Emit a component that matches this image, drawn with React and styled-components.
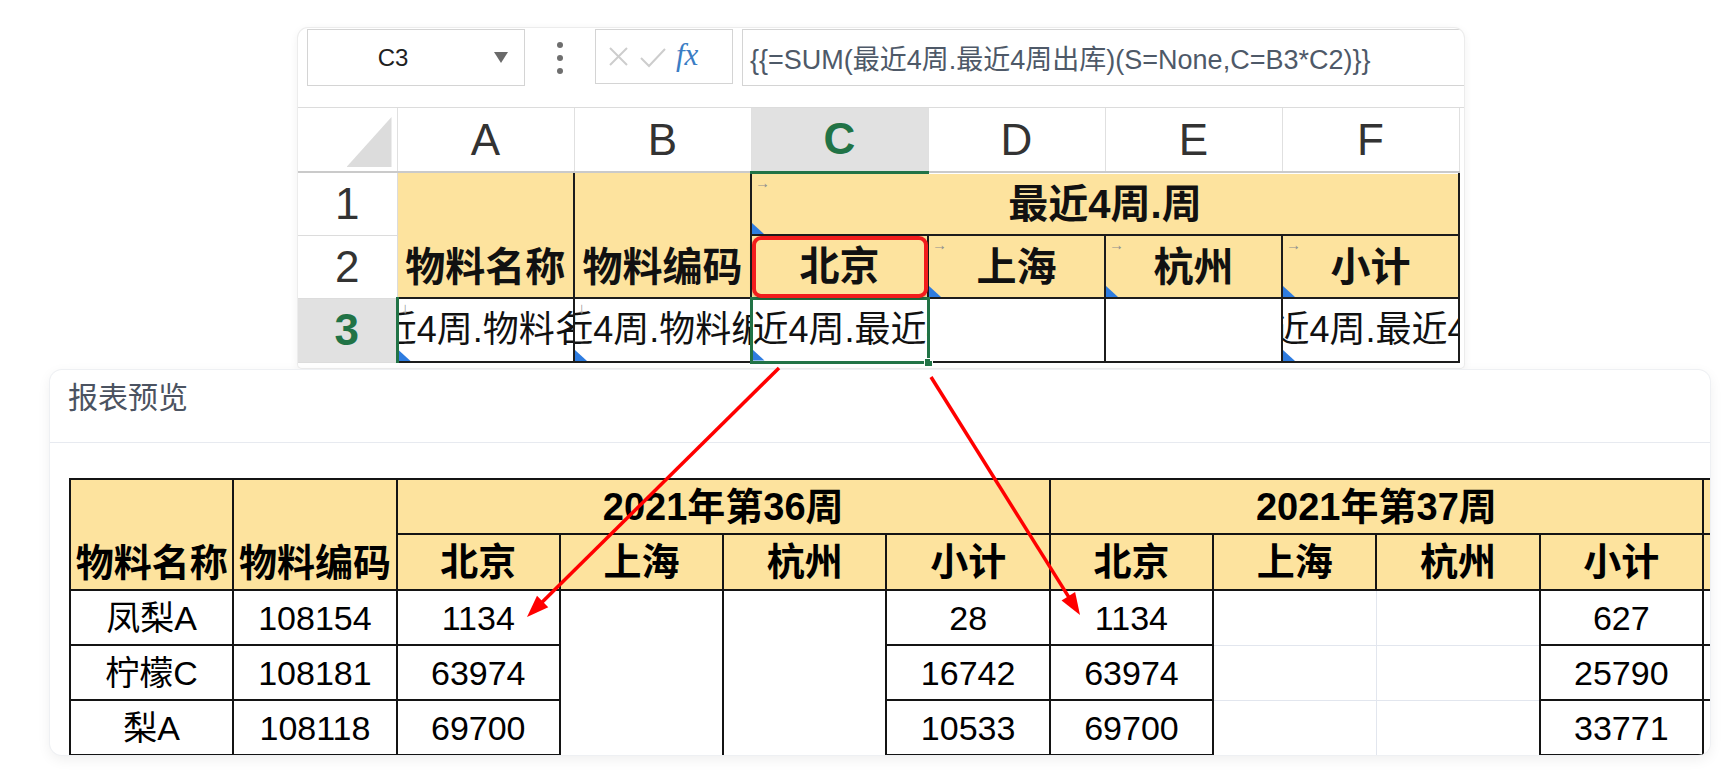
import styled, { createGlobalStyle, css } from 'styled-components'

const YELLOW = '#fde39e'
const GREEN = '#217346'

const GlobalStyle = createGlobalStyle`
  *, *::before, *::after { box-sizing:border-box; }
  html, body { margin:0; padding:0; background:#fff; }
  body { font-family:"Liberation Sans", "Noto Sans CJK SC", sans-serif; }
`

const Page = styled.div`
position:relative;
width:1732px;
height:770px;
overflow:hidden;
padding-top:28px;
background:#fff;
`

/* ---------- spreadsheet card ---------- */

const SheetCard = styled.div`
margin-left:298px;
width:1166px;
height:340px;
background:#fff;
border-radius:10px 10px 4px 4px;
box-shadow:0 0 0 1px #ececec, 0 2px 10px rgba(0,0,0,0.07);
overflow:hidden;
`

const Toolbar = styled.div`
display:flex;
align-items:flex-start;
height:80px;
padding:1px 0 0 9px;
border-bottom:1px solid #dcdcdc;
`

const NameBox = styled.div`
display:flex;
align-items:center;
width:218px;
height:57px;
border:1px solid #d4d4d4;
`

const NameText = styled.div`
flex:1;
text-align:center;
font-size:24px;
color:#1f1f1f;
`

const DropArrow = styled.span`
width:0;
height:0;
margin:0 16px;
border-left:7px solid transparent;
border-right:7px solid transparent;
border-top:11px solid #6a6a6a;
`

const MoreDots = styled.div`
display:flex;
flex-direction:column;
align-items:center;
justify-content:center;
gap:7px;
width:70px;
height:57px;
`

const Dot = styled.span`
width:6px;
height:6px;
border-radius:50%;
background:#6e6e6e;
`

const FxBox = styled.div`
display:flex;
align-items:center;
gap:9px;
width:138px;
height:55px;
padding-left:11px;
border:1px solid #d4d4d4;
`

const Fx = styled.span`
font-family:"Liberation Serif", serif;
font-style:italic;
font-size:31px;
line-height:31px;
margin-top:-4px;
color:#3b7dc4;
`

const FormulaBox = styled.div`
flex:1;
display:flex;
align-items:center;
height:57px;
margin-left:9px;
padding-left:7px;
border:1px solid #d4d4d4;
border-right:none;
font-size:27px;
color:#4e5968;
white-space:nowrap;
overflow:hidden;
`

const SheetTable = styled.table`
border-collapse:collapse;
table-layout:fixed;
width:1161px;
`

const ColHead = styled.th`
height:64px;
padding:0;
font-size:44px;
font-weight:400;
color:#333;
text-align:center;
background:#fff;
border-right:1px solid #e0e0e0;
border-bottom:2px solid #cacaca;
${(p) => p.$active && css`
  background:#e1e1e1;
  color:${GREEN};
  font-weight:700;
  border-bottom:3px solid ${GREEN};
`}
`

const CornerHead = styled(ColHead)`
vertical-align:bottom;
`

const SelectAll = styled.div`
width:45px;
height:50px;
margin:0 5px 4px auto;
background:#dcdcdc;
clip-path:polygon(100% 0, 100% 100%, 0 100%);
`

const RowNum = styled.th`
height:${(p) => p.$h}px;
padding:0;
font-size:44px;
font-weight:400;
color:#333;
text-align:center;
background:#fff;
border-right:1px solid #dcdcdc;
border-bottom:1px solid #dcdcdc;
${(p) => p.$active && css`
  background:#e1e1e1;
  color:${GREEN};
  font-weight:700;
  border-right:3px solid ${GREEN};
`}
`

const SheetCell = styled.td`
position:relative;
padding:0;
border:2px solid #1c1c1c;
${(p) => p.$noTop && 'border-top:none;'}
${(p) => p.$noLeft && 'border-left:none;'}
background:${(p) => (p.$fill ? YELLOW : '#fff')};
font-size:${(p) => (p.$bold ? 40 : 36)}px;
font-weight:${(p) => (p.$bold ? 700 : 400)};
color:#111;
vertical-align:${(p) => (p.$bottom ? 'bottom' : 'middle')};
${(p) => p.$selected && css`border:3px solid ${GREEN};`}
`

const CellText = styled.div`
display:flex;
justify-content:${(p) => (p.$left ? 'flex-start' : 'center')};
width:100%;
line-height:60px;
white-space:nowrap;
overflow:hidden;
`

const CornerMark = styled.span`
position:absolute;
left:0;
bottom:0;
width:12px;
height:11px;
background:#2e7ce0;
clip-path:polygon(0 0, 100% 100%, 0 100%);
`

const FlowMark = styled.span`
position:absolute;
left:3px;
top:1px;
font-size:15px;
line-height:15px;
font-weight:400;
color:#8e8e8e;
`

const RedFrame = styled.span`
position:absolute;
inset:0 -1px -1px 0;
border:4px solid #f21c1c;
border-radius:9px;
box-shadow:0 1px 3px rgba(0,0,0,0.25);
`

const FillHandle = styled.span`
position:absolute;
right:-6px;
bottom:-6px;
width:9px;
height:9px;
background:${GREEN};
border:1px solid #fff;
`

/* ---------- preview card ---------- */

const PreviewCard = styled.div`
display:flex;
flex-direction:column;
margin:2px 0 0 50px;
width:1660px;
height:385px;
background:#fff;
border-radius:12px;
box-shadow:0 0 0 1px #eef0f3, 0 4px 14px rgba(0,0,0,0.07);
overflow:hidden;
`

const PreviewHeader = styled.div`
height:73px;
padding:8px 0 0 18px;
border-bottom:1px solid #e7eaf0;
font-size:30px;
line-height:40px;
color:#4b5361;
`

const PreviewBody = styled.div`
flex:1;
padding:35px 0 0 19px;
overflow:hidden;
`

const ReportTable = styled.table`
border-collapse:collapse;
table-layout:fixed;
width:1797px;
`

const RCell = styled.td`
height:${(p) => p.$h || 55}px;
padding:0;
border:2px solid #141414;
background:${(p) => (p.$head ? YELLOW : '#fff')};
font-size:${(p) => (p.$head ? 38 : 34)}px;
font-weight:${(p) => (p.$head ? 700 : 400)};
line-height:52px;
color:#000;
text-align:center;
white-space:nowrap;
overflow:hidden;
vertical-align:${(p) => (p.$bottom ? 'bottom' : 'middle')};
${(p) => p.$soft && 'border:1px solid #e2e6ee;'}
`

/* ---------- arrows ---------- */

const Overlay = styled.svg`
position:absolute;
left:0;
top:0;
width:1732px;
height:770px;
pointer-events:none;
`

function Arrow({ from, to }) {
  const [x1, y1] = from
  const [x2, y2] = to
  const len = Math.hypot(x2 - x1, y2 - y1)
  const ux = (x2 - x1) / len
  const uy = (y2 - y1) / len
  const hl = 22
  const hw = 8
  const bx = x2 - ux * hl
  const by = y2 - uy * hl
  const pts = [
    [x2, y2],
    [bx - uy * hw, by + ux * hw],
    [bx + uy * hw, by - ux * hw],
  ]
  return (
    <g>
      <line x1={x1} y1={y1} x2={bx + ux * 3} y2={by + uy * 3} stroke="#ff0000" strokeWidth="3.5" />
      <polygon points={pts.map((p) => p.join(',')).join(' ')} fill="#ff0000" />
    </g>
  )
}

const cities = ['北京', '上海', '杭州', '小计']

const rows = [
  { name: '凤梨A', code: '108154', w36: ['1134', '28'], w37: ['1134', '627'] },
  { name: '柠檬C', code: '108181', w36: ['63974', '16742'], w37: ['63974', '25790'] },
  { name: '梨A', code: '108118', w36: ['69700', '10533'], w37: ['69700', '33771'] },
  { name: '苹果B', code: '108120', w36: ['5210', '412'], w37: ['5210', '388'] },
]

const rowHeights = [53, 55, 55, 55]

export default function App() {
  return (
    <Page>
      <GlobalStyle />

      <SheetCard>
        <Toolbar>
          <NameBox>
            <NameText>C3</NameText>
            <DropArrow />
          </NameBox>
          <MoreDots>
            <Dot />
            <Dot />
            <Dot />
          </MoreDots>
          <FxBox>
            <svg width="23" height="23" viewBox="0 0 23 23">
              <path d="M3 3 L20 20 M20 3 L3 20" stroke="#cdcdcd" strokeWidth="2" fill="none" />
            </svg>
            <svg width="28" height="24" viewBox="0 0 28 24">
              <path d="M2 13 L10 21 L26 4" stroke="#cdcdcd" strokeWidth="2" fill="none" />
            </svg>
            <Fx>fx</Fx>
          </FxBox>
          <FormulaBox>{'{{=SUM(最近4周.最近4周出库)(S=None,C=B3*C2)}}'}</FormulaBox>
        </Toolbar>

        <SheetTable>
          <colgroup>
            <col style={{ width: 99 }} />
            {['A', 'B', 'C', 'D', 'E', 'F'].map((c) => (
              <col key={c} style={{ width: 177 }} />
            ))}
          </colgroup>
          <tbody>
            <tr>
              <CornerHead>
                <SelectAll />
              </CornerHead>
              {['A', 'B', 'C', 'D', 'E', 'F'].map((c) => (
                <ColHead key={c} $active={c === 'C'}>{c}</ColHead>
              ))}
            </tr>
            <tr>
              <RowNum $h={63}>1</RowNum>
              <SheetCell rowSpan={2} $fill $bold $bottom $noTop $noLeft>
                <CellText>物料名称</CellText>
              </SheetCell>
              <SheetCell rowSpan={2} $fill $bold $bottom $noTop>
                <CellText>物料编码</CellText>
              </SheetCell>
              <SheetCell colSpan={4} $fill $bold $noTop>
                <FlowMark>→</FlowMark>
                <CellText>最近4周.周</CellText>
                <CornerMark />
              </SheetCell>
            </tr>
            <tr>
              <RowNum $h={63}>2</RowNum>
              <SheetCell $fill $bold>
                <CellText>北京</CellText>
                <RedFrame />
              </SheetCell>
              {['上海', '杭州', '小计'].map((c) => (
                <SheetCell key={c} $fill $bold>
                  <FlowMark>→</FlowMark>
                  <CellText>{c}</CellText>
                  <CornerMark />
                </SheetCell>
              ))}
            </tr>
            <tr>
              <RowNum $h={64} $active>3</RowNum>
              <SheetCell $noLeft>
                <FlowMark>↓</FlowMark>
                <CellText>最近4周.物料名称</CellText>
                <CornerMark />
              </SheetCell>
              <SheetCell>
                <FlowMark>↓</FlowMark>
                <CellText>最近4周.物料编码</CellText>
                <CornerMark />
              </SheetCell>
              <SheetCell $selected>
                <CellText $left>近4周.最近4周出库</CellText>
                <CornerMark />
                <FillHandle />
              </SheetCell>
              <SheetCell />
              <SheetCell />
              <SheetCell>
                <CellText>最近4周.最近4周</CellText>
                <CornerMark />
              </SheetCell>
            </tr>
          </tbody>
        </SheetTable>
      </SheetCard>

      <PreviewCard>
        <PreviewHeader>报表预览</PreviewHeader>
        <PreviewBody>
          <ReportTable>
            <colgroup>
              {Array.from({ length: 11 }, (_, i) => (
                <col key={i} style={{ width: 163.3 }} />
              ))}
            </colgroup>
            <tbody>
              <tr>
                <RCell as="th" rowSpan={2} $head $bottom>物料名称</RCell>
                <RCell as="th" rowSpan={2} $head $bottom>物料编码</RCell>
                <RCell as="th" colSpan={4} $head>2021年第36周</RCell>
                <RCell as="th" colSpan={4} $head>2021年第37周</RCell>
                <RCell as="th" $head />
              </tr>
              <tr>
                {[36, 37].map((w) =>
                  cities.map((c) => (
                    <RCell as="th" key={`${w}-${c}`} $head $h={56}>{c}</RCell>
                  ))
                )}
                <RCell as="th" $head $h={56} />
              </tr>
              {rows.map((r, i) => (
                <tr key={r.code}>
                  <RCell $h={rowHeights[i]}>{r.name}</RCell>
                  <RCell>{r.code}</RCell>
                  <RCell>{r.w36[0]}</RCell>
                  {i === 0 && <RCell rowSpan={rows.length} />}
                  {i === 0 && <RCell rowSpan={rows.length} />}
                  <RCell>{r.w36[1]}</RCell>
                  <RCell>{r.w37[0]}</RCell>
                  <RCell $soft />
                  <RCell $soft />
                  <RCell>{r.w37[1]}</RCell>
                  <RCell />
                </tr>
              ))}
            </tbody>
          </ReportTable>
        </PreviewBody>
      </PreviewCard>

      <Overlay viewBox="0 0 1732 770">
        <Arrow from={[779, 368]} to={[527, 617]} />
        <Arrow from={[931, 377]} to={[1080, 615]} />
      </Overlay>
    </Page>
  )
}
